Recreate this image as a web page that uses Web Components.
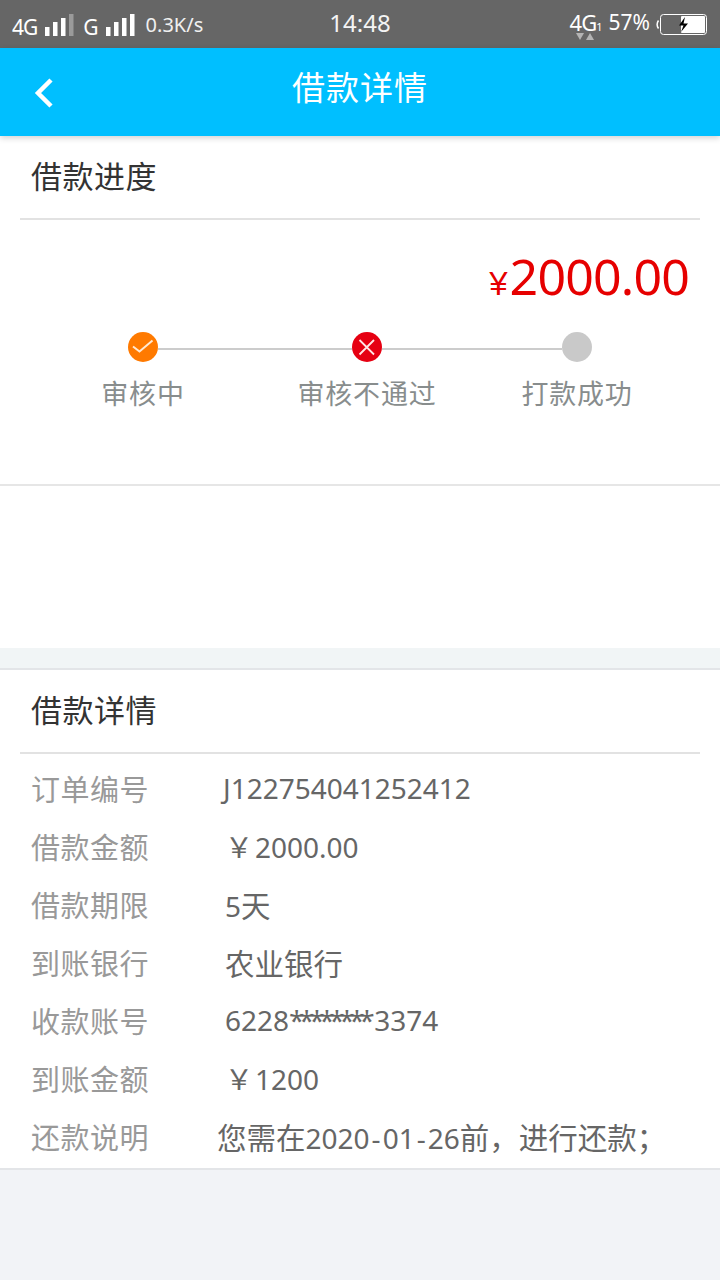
<!DOCTYPE html>
<html lang="zh">
<head>
<meta charset="utf-8">
<title>借款详情</title>
<style>
  html, body { margin: 0; padding: 0; }
  body {
    width: 720px;
    height: 1280px;
    overflow: hidden;
    background: #f2f3f7;
    font-family: "Noto Sans", "Noto Sans CJK SC", sans-serif;
  }
</style>
</head>
<body>
<status-bar></status-bar>
<app-header>借款详情</app-header>

<page-section heading="借款进度" gap-height="428">
  <loan-progress amount="2000.00"></loan-progress>
</page-section>

<div style="height:20px;background:#f1f5f6"></div>

<page-section heading="借款详情" class="second">
  <detail-row label="订单编号" value="J122754041252412" indent="192"></detail-row>
  <detail-row label="借款金额" value="￥2000.00" indent="194"></detail-row>
  <detail-row label="借款期限" value="5天" indent="194"></detail-row>
  <detail-row label="到账银行" value="农业银行" indent="194"></detail-row>
  <detail-row label="收款账号" value="6228********3374" indent="194"></detail-row>
  <detail-row label="到账金额" value="￥1200" indent="194"></detail-row>
  <detail-row label="还款说明" value="您需在2020-01-26前，进行还款；" indent="186"></detail-row>
</page-section>

<script>
const FONT = '"Noto Sans", "Noto Sans CJK SC", sans-serif'

class StatusBar extends HTMLElement {
  connectedCallback () {
    const bars = (c4) => `
      <svg width="29" height="22" viewBox="0 0 29 22">
        <rect x="0" y="13" width="4.500" height="9" fill="#fff"/>
        <rect x="8" y="8" width="4.500" height="14" fill="#fff"/>
        <rect x="16" y="4" width="4.500" height="18" fill="#fff"/>
        <rect x="24" y="0" width="4.500" height="22" fill="${c4}"/>
      </svg>`
    this.attachShadow({ mode: 'open' }).innerHTML = `
    <style>
      :host { display: block; height: 48px; background: #666; color: #fff; font-family: ${FONT}; }
      .bar { display: grid; grid-template-columns: 1fr auto 1fr; height: 48px; padding: 0 12px; box-sizing: border-box; align-items: center; }
      .left, .right { display: flex; align-items: center; }
      .right { justify-content: flex-end; }
      .sig { font-size: 21px; letter-spacing: -1px; margin-right: 8px; position: relative; top: 3px; }
      .left svg { position: relative; top: 1px; }
      .speed { font-size: 20px; margin-left: 11px; position: relative; color: #f0f0f0; }
      .time { font-size: 24px; position: relative; top: -2px; color: #f4f4f4; }
      .net { position: relative; font-size: 22px; letter-spacing: -1px; top: -2px; }
      .net small { font-size: 11px; letter-spacing: 0; }
      .net svg { position: absolute; left: 6px; top: 25px; }
      .pct { font-size: 21px; margin-left: 6px; position: relative; top: -2px; }
    </style>
    <div class="bar">
      <div class="left">
        <span class="sig">4G</span>${bars('#9a9a9a')}
        <span class="sig" style="margin-left:9px">G</span>${bars('#fff')}
        <span class="speed">0.3K/s</span>
      </div>
      <div class="time">14:48</div>
      <div class="right">
        <span class="net">4G<small>1</small>
          <svg width="18" height="9" viewBox="0 0 18 9">
            <path d="M0 1h8L4 8z" fill="#b4b4b4"/><path d="M10 8h8L14 1z" fill="#b4b4b4"/>
          </svg>
        </span>
        <span class="pct">57%</span>
        <svg width="51" height="21" viewBox="0 0 51 21" style="margin-left:6px;margin-right:1px">
          <path d="M2.500 6.500a7 7 0 0 0 0 8" fill="none" stroke="#fff" stroke-width="1.500"/>
          <rect x="4.500" y="0.500" width="46" height="20" rx="3" fill="#666" stroke="#fff"/>
          <rect x="25" y="2" width="24" height="17" rx="1" fill="#fff"/>
          <path d="M29 3l-6 8.500h4.500L25 18l7-8.500h-4.500z" fill="#000"/>
        </svg>
      </div>
    </div>`
  }
}

class AppHeader extends HTMLElement {
  connectedCallback () {
    this.attachShadow({ mode: 'open' }).innerHTML = `
    <style>
      :host {
        display: block; position: relative; height: 88px; background: #00bfff; color: #fff;
        box-shadow: 0 2px 6px rgba(0,0,0,.18);
        font-family: ${FONT};
      }
      .in { display: flex; height: 88px; align-items: center; justify-content: center; font-size: 33px; letter-spacing: 1px; }
      .title { position: relative; top: -6px; }
      svg { position: absolute; left: 33px; top: 29px; }
    </style>
    <div class="in">
      <svg width="22" height="32" viewBox="0 0 22 32">
        <path d="M18 3L5 16l13 13" fill="none" stroke="#fff" stroke-width="4.500"/>
      </svg>
      <span class="title"><slot></slot></span>
    </div>`
  }
}

class PageSection extends HTMLElement {
  connectedCallback () {
    const gap = this.getAttribute('gap-height')
    this.attachShadow({ mode: 'open' }).innerHTML = `
    <style>
      :host { display: block; background: #fff; font-family: ${FONT}; }
      :host(.second) { border-top: 2px solid #e3e5e8; border-bottom: 2px solid #e3e5e8; height: 498px; }
      h2 {
        margin: 0 20px; padding: 0 11px 5px; height: 77px;
        border-bottom: 2px solid #e2e2e2; display: flex; align-items: center;
        font-size: 31px; font-weight: 400; color: #333; letter-spacing: .5px;
      }
      .body { ${gap ? 'height: ' + gap + 'px;' : 'padding-top: 5px;'} }
    </style>
    <h2>${this.getAttribute('heading')}</h2>
    <div class="body"><slot></slot></div>`
  }
}

class LoanProgress extends HTMLElement {
  connectedCallback () {
    this.attachShadow({ mode: 'open' }).innerHTML = `
    <style>
      :host { display: block; height: 428px; box-sizing: border-box; font-family: ${FONT}; }
      .amount { display: flex; justify-content: flex-end; align-items: baseline; padding: 25px 31px 0 0; height: 87px; box-sizing: border-box; color: #e60000; font-size: 50px; letter-spacing: -.8px; line-height: 62px; }
      .amount small { font-size: 33px; margin-right: 2px; letter-spacing: 0; font-family: "Liberation Sans", sans-serif; }
      .track { display: flex; align-items: center; padding-left: 128px; height: 30px; margin-top: 25px; }
      .line { height: 2px; background: #cccccc; position: relative; top: 2px; }
      .labels { display: grid; grid-template-columns: 224px 224px 196px; padding-left: 31px; margin-top: 11px; font-size: 27px; letter-spacing: .8px; color: #888d8d; text-align: center; }
      .rule { height: 2px; background: #e6e6e6; margin-top: 72px; }
    </style>
    <div class="amount"><small>¥</small>${this.getAttribute('amount')}</div>
    <div class="track">
      <step-dot state="ok"></step-dot>
      <div class="line" style="width:194px"></div>
      <step-dot state="fail"></step-dot>
      <div class="line" style="width:180px"></div>
      <step-dot></step-dot>
    </div>
    <div class="labels"><span>审核中</span><span>审核不通过</span><span>打款成功</span></div>
    <div class="rule"></div>`
  }
}

class StepDot extends HTMLElement {
  connectedCallback () {
    const state = this.getAttribute('state')
    const bg = state === 'ok' ? '#ff7a00' : state === 'fail' ? '#e60012' : '#c9c9c9'
    let mark = ''
    if (state === 'ok') mark = '<path d="M5 14.500l6.500 5L24.500 8.500" fill="none" stroke="#ffe9d2" stroke-width="2"/>'
    if (state === 'fail') mark = '<path d="M7.500 8l14.500 14.500M22 8L7.500 22.500" fill="none" stroke="#ffe6e6" stroke-width="1.800"/>'
    this.attachShadow({ mode: 'open' }).innerHTML = `
    <style>
      :host { display: block; width: 30px; height: 30px; flex: none; }
      svg { display: block; }
    </style>
    <svg width="30" height="30" viewBox="0 0 30 30"><circle cx="15" cy="15" r="15" fill="${bg}"/>${mark}</svg>`
  }
}

class DetailRow extends HTMLElement {
  connectedCallback () {
    // chinese runs are set a bit larger than the digits, the asterisks are narrow
    const value = this.getAttribute('value')
      .replace(/-/g, '<span class="dash">-</span>')
      .replace(/[\u4e00-\u9fff]+/g, '<span class="cjk">$&</span>')
      .replace(/[，；]/g, '<span class="cjk punct">$&</span>')
      .replace(/\*+/g, '<span class="star">$&</span>')
      .replace(/￥/g, '<span class="yen">￥</span>')
    this.attachShadow({ mode: 'open' }).innerHTML = `
    <style>
      :host { display: flex; height: 58px; align-items: center; padding-left: 31px; font-family: ${FONT}; }
      .k { font-size: 29px; letter-spacing: .5px; color: #999; width: ${this.getAttribute('indent')}px; flex: none; white-space: nowrap; }
      .v { font-size: 28px; color: #666; white-space: nowrap; }
      .cjk { font-size: 29.500px; }
      .punct { display: inline-block; width: 1em; }
      .dash { margin: 0 2px; }
      .star { letter-spacing: -5.400px; margin-right: 5px; }
      .yen { margin-right: 2px; }
    </style>
    <span class="k">${this.getAttribute('label')}</span>
    <span class="v">${value}</span>`
  }
}

customElements.define('status-bar', StatusBar)
customElements.define('app-header', AppHeader)
customElements.define('page-section', PageSection)
customElements.define('loan-progress', LoanProgress)
customElements.define('step-dot', StepDot)
customElements.define('detail-row', DetailRow)
</script>
</body>
</html>
